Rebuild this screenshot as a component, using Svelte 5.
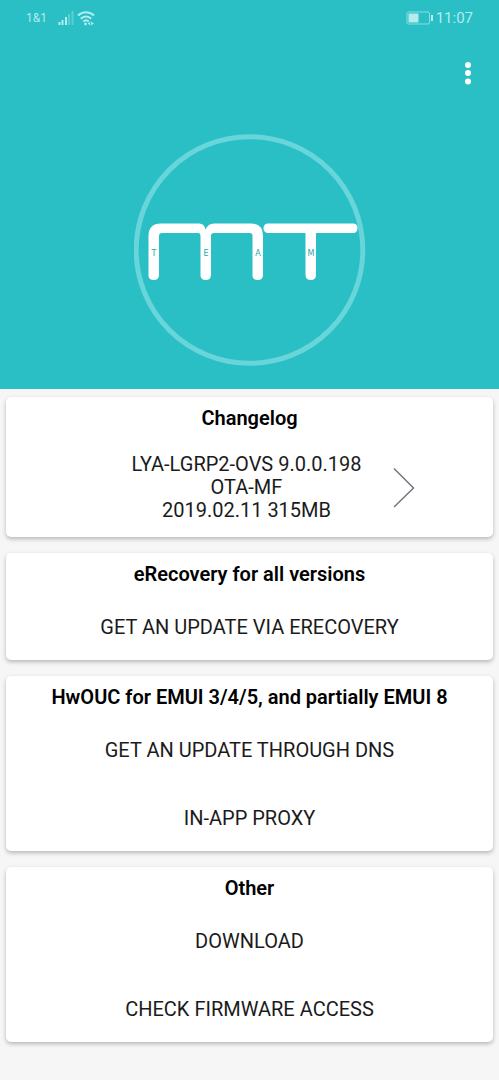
<script lang="ts">
	interface Section {
		title: string;
		actions: string[];
	}

	const release = ['LYA-LGRP2-OVS 9.0.0.198', 'OTA-MF', '2019.02.11 315MB'];

	const sections: Section[] = [
		{ title: 'eRecovery for all versions', actions: ['Get an update via eRecovery'] },
		{
			title: 'HwOUC for EMUI 3/4/5, and partially EMUI 8',
			actions: ['Get an update through DNS', 'In-app proxy']
		},
		{ title: 'Other', actions: ['Download', 'Check firmware access'] }
	];

	// Small letters set on the four legs of the logo
	const legs = [
		{ x: 20, letter: 'T' },
		{ x: 72, letter: 'E' },
		{ x: 124, letter: 'A' },
		{ x: 177, letter: 'M' }
	];
</script>

<header class="hero">
	<div class="status">
		<div class="status__group">
			<span class="status__carrier">1&amp;1</span>
			<svg class="status__signal" width="16" height="16" viewBox="0 0 16 16" aria-hidden="true">
				<path d="M1.5 12v3M4.5 10v5M8 7v8" />
				<path class="dim" d="M11 4v11M14.5 1v14" />
			</svg>
			<svg class="status__wifi" width="18" height="16" viewBox="0 0 18 16" aria-hidden="true">
				<path d="M1 5.5C5.5 1 12.5 1 17 5.5M3.8 8.7c3-3 7.4-3 10.4 0M6.3 11.5c1.6-1.5 3.8-1.5 5.4 0" />
				<circle cx="8.5" cy="14" r="1.4" />
				<path class="solid" d="M13.2 11.5v4L10.8 13.5zM14.2 11.5v4l2.6-2z" />
			</svg>
		</div>
		<div class="status__group">
			<svg width="27" height="14" viewBox="0 0 27 14" aria-hidden="true">
				<rect class="battery" x="1" y="1" width="22.5" height="12" rx="1.5" />
				<path class="solid" d="M2.5 2.5h10v9h-10zM25 4h2v6h-2z" />
			</svg>
			<span class="status__clock">11:07</span>
		</div>
	</div>

	<div class="toolbar">
		<button class="menu" aria-label="More options">
			<svg width="8" height="24" viewBox="0 0 8 24" aria-hidden="true">
				<circle cx="4" cy="4" r="3" />
				<circle cx="4" cy="12" r="3" />
				<circle cx="4" cy="20.5" r="3" />
			</svg>
		</button>
	</div>

	<svg class="logo" width="232" height="232" viewBox="0 0 232 232" role="img" aria-label="MT Team">
		<circle class="logo__ring" cx="115.5" cy="116" r="113.3" />
		<path
			class="logo__shape"
			d="M14.5 102Q14.5 89.5 27 89.5H65Q70.5 89.5 71.5 95.5Q74 89.5 80 89.5H117Q129 89.5 129 102V141Q129 146 123.7 146T118.5 141V102Q118.5 99 116 99H80Q77 99 77 102V141Q77 146 71.7 146T66.5 141V102Q66.5 99 64 99H28Q25 99 25 102V141Q25 146 19.7 146T14.5 141Z"
		/>
		<path
			class="logo__shape"
			d="M134.5 89.5H219Q223.5 89.5 223.5 94.2T219 99H182V141Q182 146 176.8 146T171.5 141V99H134.5Q129.5 99 129.5 94.2T134.5 89.5Z"
		/>
		{#each legs as leg}
			<text x={leg.x} y="122">{leg.letter}</text>
		{/each}
	</svg>
</header>

<main class="cards">
	<section class="card">
		<h2>Changelog</h2>
		<button class="release">
			<span class="release__text">
				{#each release as line}
					<span>{line}</span>
				{/each}
			</span>
			<svg class="release__arrow" width="22" height="42" viewBox="0 0 22 42" aria-hidden="true">
				<path d="M1 1.5L20.5 21L1 40" />
			</svg>
		</button>
	</section>

	{#each sections as section}
		<section class="card">
			<h2>{section.title}</h2>
			<div class="actions">
				{#each section.actions as action}
					<button class="action">{action}</button>
				{/each}
			</div>
		</section>
	{/each}
</main>

<style>
	:global(body) {
		margin: 0;
		background: #f6f6f6;
		font-family: Roboto, sans-serif;
	}

	.hero {
		display: flex;
		flex-direction: column;
		padding-bottom: 23px;
		background: #29bfc5;
	}

	.status {
		display: flex;
		justify-content: space-between;
		align-items: center;
		height: 36px;
		padding: 0 26px;
		color: #b4ebed;
	}

	.status__group {
		display: flex;
		align-items: center;
		gap: 3px;
	}

	.status__carrier {
		margin-right: 8px;
		font-size: 12px;
	}

	.status__clock {
		font-size: 15px;
	}

	.status path {
		fill: none;
		stroke: currentColor;
		stroke-width: 2;
	}

	.status .dim {
		opacity: 0.35;
	}

	.status circle,
	.status .solid {
		fill: currentColor;
		stroke: none;
	}

	.battery {
		fill: none;
		stroke: currentColor;
		opacity: 0.7;
	}

	.toolbar {
		display: flex;
		justify-content: flex-end;
		align-items: center;
		height: 74px;
		padding: 0 15px;
	}

	button {
		padding: 0;
		border: 0;
		background: none;
		color: #1b1b1b;
		font: inherit;
		cursor: pointer;
	}

	.menu {
		display: flex;
		align-items: center;
		justify-content: center;
		width: 32px;
		height: 48px;
	}

	.menu circle {
		fill: #fff;
	}

	.logo {
		align-self: center;
		margin-top: 24px;
	}

	.logo__ring {
		fill: none;
		stroke: #67d5da;
		stroke-width: 5;
	}

	.logo__shape {
		fill: #fff;
	}

	.logo text {
		fill: #29a9ae;
		font-family: 'DejaVu Sans', sans-serif;
		font-size: 8px;
		text-anchor: middle;
	}

	.cards {
		display: grid;
		gap: 16px;
		padding: 8px 6px 38px;
	}

	.card {
		border-radius: 5px;
		background: #fff;
		box-shadow: 0 2px 4px rgba(0, 0, 0, 0.26);
	}

	h2 {
		margin: 0;
		padding: 9px 8px 8px;
		color: #000;
		font-size: 20px;
		font-weight: 600;
		line-height: 24px;
		text-align: center;
	}

	.actions {
		display: grid;
		gap: 2px;
	}

	.action {
		height: 66px;
		font-size: 20px;
		text-transform: uppercase;
	}

	.release {
		display: grid;
		grid-template-columns: 1fr auto 1fr;
		align-items: center;
		width: 100%;
		height: 99px;
		padding-right: 6px;
		font-size: 20px;
		line-height: 23px;
	}

	.release__text {
		display: grid;
		grid-column: 2;
	}

	.release__arrow {
		margin-left: 32px;
	}

	.release__arrow path {
		fill: none;
		stroke: #737580;
		stroke-width: 1.5;
	}
</style>
